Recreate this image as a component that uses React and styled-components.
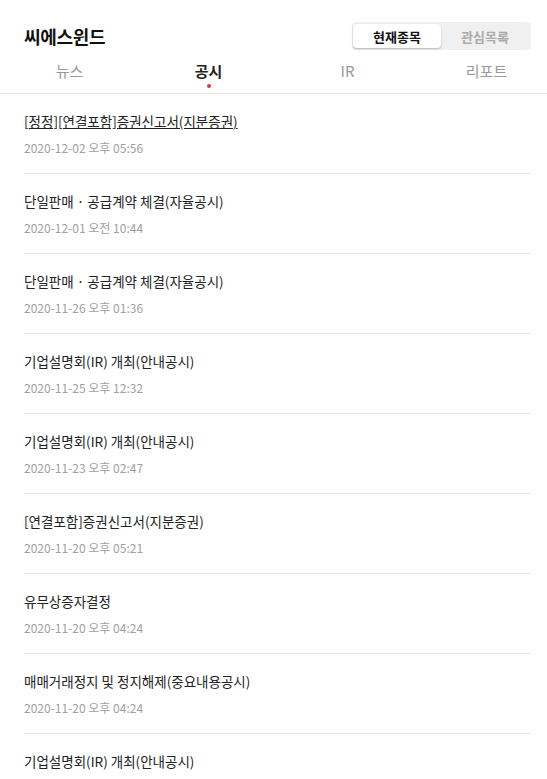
import React, { useState } from "react";
import styled, { createGlobalStyle } from "styled-components";

const GlobalStyle = createGlobalStyle`
    html, body {
        margin: 0;
        padding: 0;
        background: #fff;
    }
    body {
        font-family: "Noto Sans CJK KR", "Noto Sans", sans-serif;
        color: #222;
    }
`

const Page = styled.div`
    width: 547px;
    height: 779px;
    overflow: hidden;
    background: #fff;
`
const TopBar = styled.div`
    display: flex;
    align-items: center;
    justify-content: space-between;
    padding: 22px 16px 0 24px;
`
const Title = styled.h1`
    margin: 0;
    font-size: 18px;
    font-weight: 700;
    color: #111;
    letter-spacing: -0.3px;
`
const Toggle = styled.div`
    display: flex;
    width: 179px;
    height: 28px;
    padding: 2px 2px 2px 1px;
    box-sizing: border-box;
    background: #f0f0f0;
    border-radius: 4px;
`
const ToggleButton = styled.button`
    flex: 1;
    border: none;
    border-radius: 4px;
    font-family: inherit;
    font-size: 13px;
    font-weight: 700;
    padding: 0;
    cursor: pointer;
    background: ${(p) => (p.$active ? "#fff" : "transparent")};
    color: ${(p) => (p.$active ? "#111" : "#aaa")};
    box-shadow: ${(p) => (p.$active ? "0 1px 2px rgba(0,0,0,0.25)" : "none")};
`
const Tabs = styled.div`
    display: grid;
    grid-template-columns: repeat(4, 139px);
    margin-top: 6px;
    border-bottom: 1px solid #e5e5e5;
`
const Tab = styled.div`
    position: relative;
    text-align: center;
    height: 37px;
    line-height: 30px;
    font-size: 15px;
    font-weight: ${(p) => (p.$active ? 700 : 400)};
    color: ${(p) => (p.$active ? "#222" : "#999")};
    cursor: pointer;
`
const Dot = styled.span`
    position: absolute;
    left: 50%;
    top: 28px;
    width: 4px;
    height: 4px;
    margin-left: -2px;
    border-radius: 50%;
    background: #d83a3a;
`
const List = styled.ul`
    list-style: none;
    margin: 0;
    padding: 0 16px 0 24px;
`
const Item = styled.li`
    padding: 17px 0 16px;
    border-bottom: 1px solid #e5e5e5;
`
const ItemTitle = styled.div`
    font-size: 13.5px;
    line-height: 20px;
    color: #222;
    text-decoration: ${(p) => (p.$hover ? "underline" : "none")};
`
const ItemDate = styled.div`
    margin-top: 8px;
    font-size: 12px;
    line-height: 18px;
    color: #a0a0a0;
`

const tabs = ["뉴스", "공시", "IR", "리포트"];

const notices = [
    { title: "[정정][연결포함]증권신고서(지분증권)", date: "2020-12-02 오후 05:56" },
    { title: "단일판매 · 공급계약 체결(자율공시)", date: "2020-12-01 오전 10:44" },
    { title: "단일판매 · 공급계약 체결(자율공시)", date: "2020-11-26 오후 01:36" },
    { title: "기업설명회(IR) 개최(안내공시)", date: "2020-11-25 오후 12:32" },
    { title: "기업설명회(IR) 개최(안내공시)", date: "2020-11-23 오후 02:47" },
    { title: "[연결포함]증권신고서(지분증권)", date: "2020-11-20 오후 05:21" },
    { title: "유무상증자결정", date: "2020-11-20 오후 04:24" },
    { title: "매매거래정지 및 정지해제(중요내용공시)", date: "2020-11-20 오후 04:24" },
    { title: "기업설명회(IR) 개최(안내공시)", date: "2020-11-19 오후 03:10" },
];

const App = () => {
    const [mode, setMode] = useState("current");
    const [tab, setTab] = useState(1);

    return (
        <Page>
            <GlobalStyle />
            <TopBar>
                <Title>씨에스윈드</Title>
                <Toggle>
                    <ToggleButton $active={mode === "current"} onClick={() => setMode("current")}>현재종목</ToggleButton>
                    <ToggleButton $active={mode === "watch"} onClick={() => setMode("watch")}>관심목록</ToggleButton>
                </Toggle>
            </TopBar>
            <Tabs>
                {tabs.map((name, i) => (
                    <Tab key={name} $active={tab === i} onClick={() => setTab(i)}>
                        {name}
                        {tab === i && <Dot />}
                    </Tab>
                ))}
            </Tabs>
            <List>
                {notices.map((n, i) => (
                    <Item key={i}>
                        <ItemTitle $hover={i === 0}>{n.title}</ItemTitle>
                        <ItemDate>{n.date}</ItemDate>
                    </Item>
                ))}
            </List>
        </Page>
    );
}

export default App;
